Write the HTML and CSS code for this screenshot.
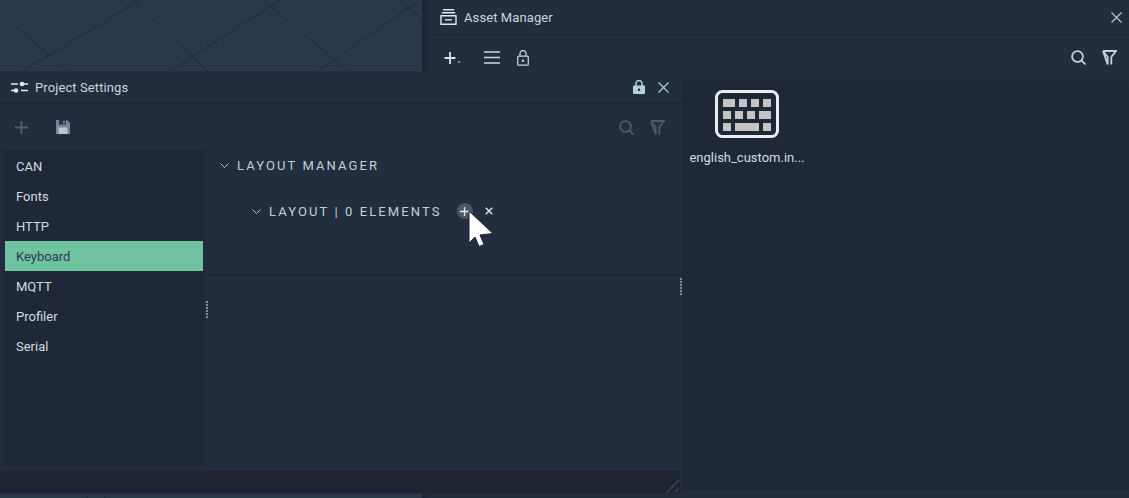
FILE: index.html
```html
<!DOCTYPE html>
<html lang="en">
<head>
    <meta charset="UTF-8">
    <title>Project Settings</title>
    <link rel="stylesheet" href="styles.css">
</head>
<body>
    <div class="desktop">
        <svg class="grid" width="430" height="498" viewBox="0 0 430 498">
            <g fill="none" stroke="#1f2a39" stroke-width="1">
                <path d="M0 13L68 71"/>
                <path d="M22 71L140 0"/>
                <path d="M133 0L207 71"/>
                <path d="M170 71L280 0"/>
                <path d="M263 0L348 71"/>
                <path d="M318 71L420 0"/>
                <path d="M398 0L422 18"/>
                <path d="M84 494L88 498"/>
                <path d="M108 494L104 498"/>
            </g>
        </svg>

        <section class="window asset-window">
            <header class="title-bar">
                <svg class="title-icon" width="17" height="16" viewBox="0 0 17 16">
                    <path d="M3 .8h11M1.800 3.800h13.400" stroke="#dfe6ea" stroke-width="1.400" fill="none"/>
                    <path d="M1 6.800h15v8.400H1z" stroke="#dfe6ea" stroke-width="1.400" fill="none"/>
                    <path d="M5 10.800h7" stroke="#dfe6ea" stroke-width="1.400"/>
                </svg>
                <span class="title-text">Asset Manager</span>
                <svg class="close-icon" width="11" height="11" viewBox="0 0 11 11">
                    <path d="M.5.5l10 10M10.500.5l-10 10" stroke="#b4cbd0" stroke-width="1.200"/>
                </svg>
            </header>
            <div class="toolbar asset-toolbar">
                <svg width="17" height="14" viewBox="0 0 17 14">
                    <path d="M6 1v12M.5 7h11" stroke="#d5e3e6" stroke-width="1.800"/>
                    <path d="M13.500 10.500h3l-1.500 1.500z" fill="#d5e3e6"/>
                </svg>
                <svg class="tool-menu" width="16" height="13" viewBox="0 0 16 13">
                    <path d="M0 1h16M0 6.500h16M0 12h16" stroke="#c6d8dc" stroke-width="1.400"/>
                </svg>
                <svg class="tool-lock" width="12" height="16" viewBox="0 0 12 16">
                    <path d="M3 6.500V3.500a3 3 0 0 1 6 0V6.500" stroke="#c0d2d7" stroke-width="1.300" fill="none"/>
                    <rect x=".7" y="6.200" width="10.600" height="9" rx="1" stroke="#c0d2d7" stroke-width="1.300" fill="none"/>
                    <circle cx="6" cy="10.700" r="1.300" fill="#c0d2d7"/>
                </svg>
                <div class="spacer"></div>
                <svg class="tool-search" width="15" height="15" viewBox="0 0 15 15">
                    <circle cx="6.500" cy="6.500" r="5.400" stroke="#c0d2d7" stroke-width="1.800" fill="none"/>
                    <path d="M10.500 10.500l4 4" stroke="#c0d2d7" stroke-width="1.800"/>
                </svg>
                <svg class="tool-filter" width="15" height="15" viewBox="0 0 15 15">
                    <path d="M1 1h13L9.300 7v7.500M5.700 14.500V7L1 1z" stroke="#c0d2d7" stroke-width="1.800" fill="none"/>
                </svg>
            </div>
            <div class="asset-body">
                <div class="asset-item">
                    <svg width="64" height="48" viewBox="0 0 64 48">
                        <rect x="1.500" y="1.500" width="61" height="45" rx="6" fill="#1e2836" stroke="#e9edf0" stroke-width="3"/>
                        <g fill="#c4c4c4">
                            <rect x="8" y="9" width="12" height="8"/><rect x="24" y="9" width="8" height="8"/><rect x="36" y="9" width="8" height="8"/><rect x="48" y="9" width="8" height="8"/>
                            <rect x="8" y="21" width="8" height="8"/><rect x="20" y="21" width="8" height="8"/><rect x="32" y="21" width="8" height="8"/><rect x="44" y="21" width="12" height="8"/>
                            <rect x="8" y="33" width="8" height="8"/><rect x="20" y="33" width="24" height="8"/><rect x="48" y="33" width="8" height="8"/>
                        </g>
                    </svg>
                    <span class="asset-name">english_custom.in...</span>
                </div>
            </div>
        </section>

        <section class="window settings-window">
            <header class="title-bar settings-title">
                <svg class="title-icon" width="17" height="12" viewBox="0 0 17 12">
                    <path d="M0 3h7M13 3h4M0 9.500h3M10 9.500h7" stroke="#e6ebee" stroke-width="1.500"/>
                    <circle cx="11" cy="3" r="2.300" fill="#e6ebee"/>
                    <circle cx="5" cy="9.500" r="2.300" fill="#e6ebee"/>
                </svg>
                <span class="title-text">Project Settings</span>
                <svg class="settings-lock" width="12" height="14" viewBox="0 0 12 14">
                    <path d="M3 6V3.600a3 3 0 0 1 6 0V6" stroke="#b9d0d4" stroke-width="1.500" fill="none"/>
                    <path fill-rule="evenodd" d="M1 5.500h10a1 1 0 0 1 1 1V13a1 1 0 0 1-1 1H1a1 1 0 0 1-1-1V6.500a1 1 0 0 1 1-1zM6 8.500a1.300 1.300 0 1 0 0 2.600a1.300 1.300 0 0 0 0-2.600z" fill="#b9d0d4"/>
                </svg>
                <svg class="close-icon" width="11" height="11" viewBox="0 0 11 11">
                    <path d="M.5.5l10 10M10.500.5l-10 10" stroke="#b4cbd0" stroke-width="1.200"/>
                </svg>
            </header>
            <div class="toolbar settings-toolbar">
                <svg width="13" height="13" viewBox="0 0 13 13">
                    <path d="M6.500 0v13M0 6.500h13" stroke="#545f6d" stroke-width="1.800"/>
                </svg>
                <svg class="tool-save" width="14" height="14" viewBox="0 0 14 14">
                    <path d="M0 0h11l3 3v11H0z" fill="#74869a"/>
                    <rect x="3" y="0" width="7" height="4.500" fill="#2a3648"/>
                    <rect x="7" y="1" width="2" height="2.500" fill="#74869a"/>
                    <rect x="2.500" y="7.500" width="9" height="6.500" fill="#b5c8cf"/>
                </svg>
                <div class="spacer"></div>
                <svg class="tool-search" width="15" height="15" viewBox="0 0 15 15">
                    <circle cx="6.500" cy="6.500" r="5.400" stroke="#4f5b6a" stroke-width="1.800" fill="none"/>
                    <path d="M10.500 10.500l4 4" stroke="#4f5b6a" stroke-width="1.800"/>
                </svg>
                <svg class="tool-filter" width="15" height="15" viewBox="0 0 15 15">
                    <path d="M1 1h13L9.300 7v7.500M5.700 14.500V7L1 1z" stroke="#4f5b6a" stroke-width="1.800" fill="none"/>
                </svg>
            </div>
            <div class="settings-main">
                <nav class="side-list">
                    <a class="side-item">CAN</a>
                    <a class="side-item">Fonts</a>
                    <a class="side-item">HTTP</a>
                    <a class="side-item active">Keyboard</a>
                    <a class="side-item">MQTT</a>
                    <a class="side-item">Profiler</a>
                    <a class="side-item">Serial</a>
                </nav>
                <div class="splitter"></div>
                <div class="detail">
                    <div class="detail-top">
                        <div class="group-row">
                            <svg class="chevron" width="9" height="5" viewBox="0 0 9 5"><path d="M.5.500l4 4 4-4" stroke="#b4c6cc" fill="none"/></svg>
                            <span class="group-label">LAYOUT MANAGER</span>
                        </div>
                        <div class="group-row sub-row">
                            <svg class="chevron" width="9" height="5" viewBox="0 0 9 5"><path d="M.5.500l4 4 4-4" stroke="#b4c6cc" fill="none"/></svg>
                            <span class="group-label">LAYOUT | 0 ELEMENTS</span>
                            <span class="add-btn">
                                <svg width="9" height="9" viewBox="0 0 9 9"><path d="M4.500 0v9M0 4.500h9" stroke="#e6ecee" stroke-width="1.300"/></svg>
                            </span>
                            <svg class="remove-btn" width="8" height="8" viewBox="0 0 8 8"><path d="M.7.700l6.600 6.600M7.300.700L.7 7.300" stroke="#d7e2e5" stroke-width="1.500"/></svg>
                        </div>
                    </div>
                    <div class="detail-bottom"></div>
                </div>
            </div>
            <footer class="status-bar">
                <svg class="resize-grip" width="14" height="14" viewBox="0 0 14 14">
                    <path d="M1 13L13 1M9 13l4-4" stroke="#4c5568" stroke-width="1.400" stroke-dasharray="1.400 .4"/>
                </svg>
            </footer>
            <div class="edge-handle"></div>
        </section>

        <svg class="cursor" width="27" height="39" viewBox="0 0 27 39">
            <path d="M1 1V33L7 27L11 36.500L16 34.500L12 25L25 23.500Z" fill="#fff" stroke="#1d2632" stroke-width="1"/>
        </svg>
    </div>
</body>
</html>
```

FILE: styles.css
```css
* {
    box-sizing: border-box;
}
body {
    margin: 0;
    background-color: #2b384b;
    font-family: Roboto, "Liberation Sans", sans-serif;
    overflow: hidden;
}
.desktop {
    position: relative;
    width: 1129px;
    height: 498px;
    overflow: hidden;
}
.grid {
    position: absolute;
    left: 0;
    top: 0;
}
.window {
    position: absolute;
    display: flex;
    flex-direction: column;
    background-color: #222d3e;
}
.asset-window {
    left: 422px;
    top: 0;
    width: 707px;
    height: 498px;
    border-left: 6px solid #1d2734;
}
.settings-window {
    left: 0;
    top: 71px;
    width: 682px;
    height: 423px;
}
.title-bar {
    display: flex;
    align-items: center;
    height: 35px;
    flex: none;
    padding: 0 7px 0 12px;
    border-bottom: 1px solid #1c2635;
}
.settings-title {
    height: 33px;
    padding: 0 13px 0 11px;
}
.title-icon {
    margin-right: 7px;
}
.title-text {
    font-size: 13px;
    color: #c9d6dc;
    flex: 1;
    letter-spacing: .1px;
}
.settings-lock {
    margin-right: 13px;
}
.toolbar {
    display: flex;
    align-items: center;
    flex: none;
}
.asset-toolbar {
    height: 45px;
    padding: 0 12px 0 16px;
}
.tool-menu {
    margin-left: 23px;
}
.tool-lock {
    margin-left: 17px;
}
.spacer {
    flex: 1;
}
.tool-filter {
    margin-left: 16px;
}
.settings-toolbar {
    height: 46px;
    padding: 0 17px 0 15px;
}
.tool-save {
    margin-left: 28px;
}
.asset-body {
    flex: 1;
    margin: 0 0 8px 254px;
    background-color: #1e2836;
    border-radius: 2px;
}
.asset-item {
    display: flex;
    flex-direction: column;
    align-items: center;
    width: 130px;
    padding-top: 10px;
}
.asset-name {
    margin-top: 12px;
    font-size: 13px;
    color: #d3dde1;
}
.settings-main {
    flex: 1;
    display: flex;
    min-height: 0;
}
.side-list {
    width: 200px;
    flex: none;
    margin: 0 0 5px 4px;
    padding: 1px 1px 0;
    display: flex;
    flex-direction: column;
    background-color: #1e2836;
    border-radius: 2px;
}
.side-item {
    display: block;
    height: 30px;
    line-height: 30px;
    padding: 1px 0 0 11px;
    font-size: 13px;
    color: #d3dde1;
}
.active {
    background-color: #70c3a1;
    color: #2b3a52;
}
.splitter {
    width: 4px;
    flex: none;
    position: relative;
}
.splitter::after {
    content: "";
    position: absolute;
    left: 2px;
    top: 151px;
    width: 2px;
    height: 17px;
    background: repeating-linear-gradient(#7f8ca0 0 2px, transparent 2px 3px);
}
.detail {
    flex: 1;
    display: flex;
    flex-direction: column;
    padding-right: 2px;
}
.detail-top {
    height: 126px;
    flex: none;
    padding-top: 8px;
    padding-left: 12px;
    border-bottom: 2px solid #1c2533;
}
.group-row {
    display: flex;
    align-items: center;
    height: 14px;
}
.sub-row {
    margin-top: 32px;
    margin-left: 32px;
}
.chevron {
    margin-right: 8px;
}
.group-label {
    font-size: 13px;
    letter-spacing: 2.100px;
    color: #c2d1d7;
}
.add-btn {
    display: flex;
    align-items: center;
    justify-content: center;
    width: 16px;
    height: 16px;
    margin-left: 15px;
    border-radius: 50%;
    background-color: #4a5668;
}
.remove-btn {
    margin-left: 12px;
}
.detail-bottom {
    flex: 1;
}
.status-bar {
    height: 22px;
    flex: none;
    margin: 0 2px 1px 0;
    background-color: #1e2530;
    display: flex;
    justify-content: flex-end;
    align-items: flex-end;
}
.edge-handle {
    position: absolute;
    right: 0;
    top: 207px;
    width: 2px;
    height: 17px;
    background: repeating-linear-gradient(#7f8ca0 0 2px, transparent 2px 3px);
}
.cursor {
    position: absolute;
    left: 468px;
    top: 210px;
}
```
